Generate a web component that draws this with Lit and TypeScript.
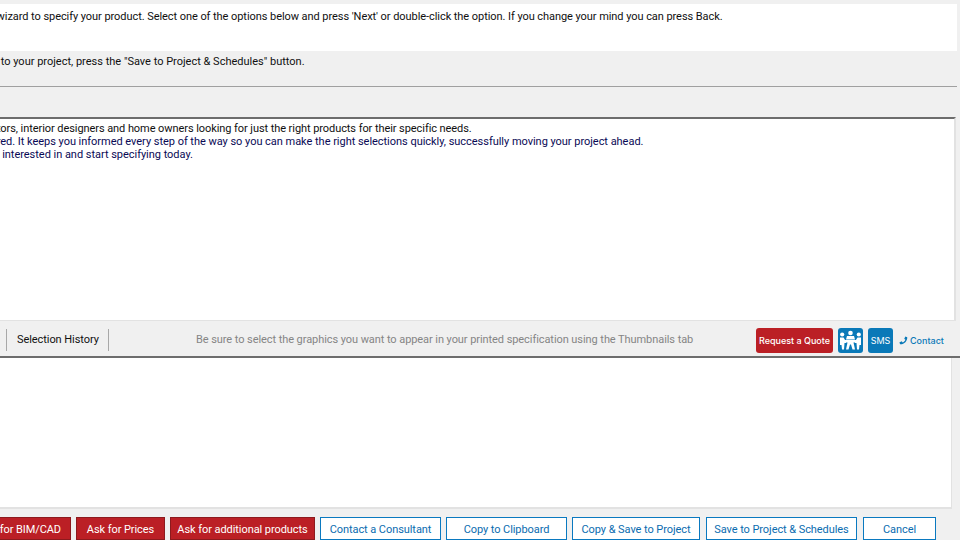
import { LitElement, html, css } from "lit";
import { customElement } from "lit/decorators.js";

@customElement("app-root")
export class AppRoot extends LitElement {
  static styles = css`
    :host {
      display: flex;
      flex-direction: column;
      width: 960px;
      height: 540px;
      overflow: hidden;
      background: #f0f0f0;
      font-family: Roboto, "Open Sans", Tahoma, sans-serif;
      font-size: 11px;
      letter-spacing: -0.07px;
      color: #101010;
    }
    .line { white-space: nowrap; }
    .intro {
      margin: 4px 3px 0 0;
      height: 47px;
      background: #fff;
      padding-top: 5px;
      box-sizing: border-box;
      overflow: hidden;
    }
    .intro .line { margin-left: -45px; letter-spacing: -0.06px; line-height: 16px; }
    .hint {
      height: 35px;
      box-sizing: border-box;
      padding-top: 3px;
      overflow: hidden;
    }
    .hint .line { margin-left: -152px; letter-spacing: 0; line-height: 16px; }
    .rule { height: 1px; background: #a0a0a0; margin-right: 3px; }
    .spacer { height: 30px; }
    .desc {
      height: 204px;
      box-sizing: border-box;
      margin-right: 4px;
      background: #fff;
      border-top: 2px solid #6d6d6d;
      border-right: 2px solid #e2e2e2;
      border-bottom: 1px solid #e2e2e2;
      padding-top: 3px;
      color: #0a0a55;
      overflow: hidden;
    }
    .desc .line { line-height: 13px; }
    .desc .l1 { margin-left: -229px; color: #101010; }
    .desc .l2 { margin-left: -111px; letter-spacing: -0.03px; }
    .desc .l3 { margin-left: -127px; letter-spacing: -0.03px; }
    .toolbar {
      height: 36px;
      box-sizing: border-box;
      margin-top: 1px;
      border-bottom: 2px solid #6d6d6d;
      display: flex;
      align-items: center;
      padding: 3px 0 0 6px;
    }
    .tab {
      border-left: 1px solid #a8a8a8;
      border-right: 1px solid #a8a8a8;
      height: 22px;
      line-height: 21px;
      width: 103px;
      box-sizing: border-box;
      padding-left: 10px;
      color: #111;
      white-space: nowrap;
      margin-top: -2px;
    }
    .note {
      margin-left: 87px;
      width: 560px;
      color: #858585;
      white-space: nowrap;
      margin-top: -2px;
    }
    .quote {
      font-family: Inter, sans-serif;
      font-weight: 500;
      font-size: 9px;
      letter-spacing: 0;
      color: #fff;
      background: #bb1f25;
      border-radius: 3px;
      width: 77px;
      height: 25px;
      display: flex;
      align-items: center;
      justify-content: center;
      white-space: nowrap;
    }
    .square {
      width: 25px;
      height: 25px;
      margin-left: 5px;
      border-radius: 3px;
      background: #0a79b8;
      color: #fff;
      display: flex;
      align-items: center;
      justify-content: center;
      font-family: Inter, sans-serif;
      font-size: 9px;
      letter-spacing: 0;
    }
    .contact {
      margin-left: 6px;
      display: flex;
      align-items: center;
      gap: 2px;
      color: #0a79b8;
      font-family: Inter, sans-serif;
      font-weight: 500;
      font-size: 9px;
      letter-spacing: 0;
    }
    .output {
      height: 151px;
      box-sizing: border-box;
      margin-right: 8px;
      background: #fff;
      border-right: 1px solid #e2e2e2;
      border-bottom: 2px solid #e2e2e2;
    }
    .actions {
      margin-top: 8px;
      height: 23px;
      display: flex;
      gap: 5px;
    }
    .btn {
      box-sizing: border-box;
      height: 23px;
      padding-top: 1px;
      flex: none;
      display: flex;
      align-items: center;
      justify-content: center;
      white-space: nowrap;
      background: #fff;
      border: 1px solid #0a79c0;
      color: #0a6cb0;
    }
    .btn.red {
      background: #bb1f25;
      border-color: #8c1a1e;
      color: #fff;
    }
    .clip { width: 71px; justify-content: flex-end; padding-right: 9px; overflow: hidden; border-left: 0; }
    .gap { margin-left: 1px; }
  `;

  private button(label: string, width: number, cls = "") {
    return html`<div class="btn ${cls}" style="width:${width}px">${label}</div>`;
  }

  render() {
    return html`
      <div class="intro">
        <div class="line">Use this wizard to specify your product. Select one of the options below and press 'Next' or double-click the option. If you change your mind you can press Back.</div>
      </div>
      <div class="hint">
        <div class="line">When you are ready to add this to your project, press the "Save to Project &amp; Schedules" button.</div>
      </div>
      <div class="rule"></div>
      <div class="spacer"></div>
      <div class="desc">
        <div class="line l1">This wizard is for architects, specifiers, contractors, interior designers and home owners looking for just the right products for their specific needs.</div>
        <div class="line l2">No experience is required. It keeps you informed every step of the way so you can make the right selections quickly, successfully moving your project ahead.</div>
        <div class="line l3">Select the product you are interested in and start specifying today.</div>
      </div>
      <div class="toolbar">
        <div class="tab">Selection History</div>
        <div class="note">Be sure to select the graphics you want to appear in your printed specification using the Thumbnails tab</div>
        <div class="quote">Request a Quote</div>
        <div class="square">
          <svg width="23" height="21" viewBox="0 0 23 21" fill="#fff">
            <circle cx="11.5" cy="3" r="2.3" />
            <circle cx="3.2" cy="4.5" r="2.1" />
            <circle cx="19.800" cy="4.500" r="2.100" />
            <path d="M8 6h7l1 3.500H7z" />
            <path d="M6 10h11v2.500h-2.500l1.500 7h-2.500L12 14.500h-1L9.500 19.500H7l1.500-7H6z" />
            <path d="M1 7.500h3.500L7 11.500v1.500H5.500l-.5 6.500H3L2.500 15H1z" />
            <path d="M22 7.500h-3.500L16 11.500v1.500h1.500l.5 6.500h2l.5-4.500H22z" />
          </svg>
        </div>
        <div class="square">SMS</div>
        <div class="contact">
          <svg width="9" height="9" viewBox="0 0 24 24" fill="#0a79b8"><path d="M22 3l-5-2-3 6 3 3c-1.500 3.500-3.500 5.500-7 7l-3-3-6 3 2 5c10 1 20-9 19-19z" /></svg>
          <span>Contact</span>
        </div>
      </div>
      <div class="output"></div>
      <div class="actions">
        <div class="btn red clip">Ask for BIM/CAD</div>
        ${this.button("Ask for Prices", 89, "red")}
        ${this.button("Ask for additional products", 145, "red")}
        ${this.button("Contact a Consultant", 121)}
        ${this.button("Copy to Clipboard", 121)}
        ${this.button("Copy & Save to Project", 128)}
        ${this.button("Save to Project & Schedules", 151, "gap")}
        ${this.button("Cancel", 73, "gap")}
      </div>
    `;
  }
}
